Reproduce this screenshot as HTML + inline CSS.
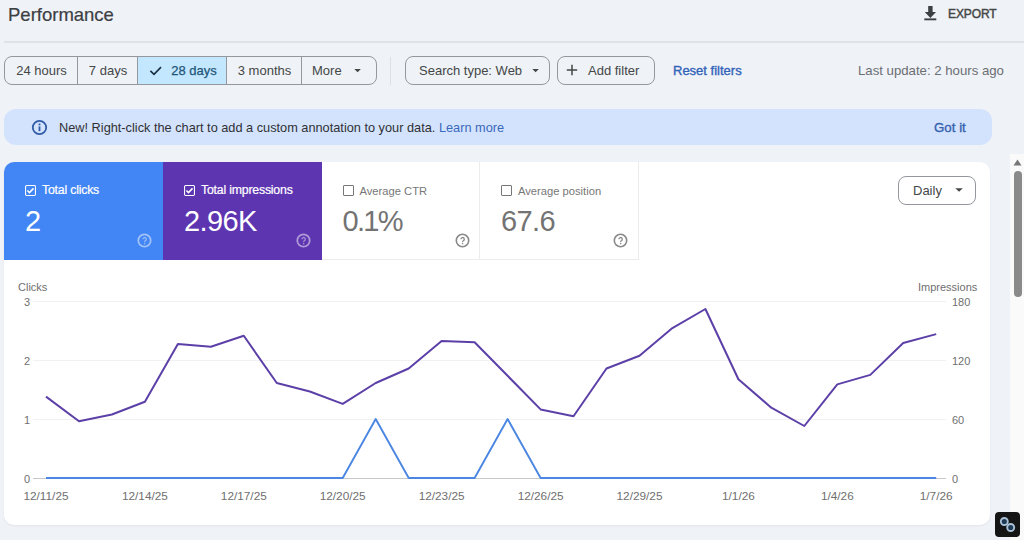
<!DOCTYPE html>
<html><head><meta charset="utf-8">
<style>
*{box-sizing:border-box;margin:0;padding:0}
html,body{width:1024px;height:540px;overflow:hidden;background:#eff2f7;font-family:"Liberation Sans",sans-serif;color:#1f1f1f}
.a{position:absolute;white-space:nowrap}
.md{-webkit-text-stroke:0.35px currentColor}
#title{left:8px;top:4px;font-size:18.5px;color:#3c4043;line-height:22px;-webkit-text-stroke:0.2px currentColor}
#export{left:948px;top:7px;font-size:12px;color:#444746;line-height:14px;-webkit-text-stroke:0.45px currentColor;letter-spacing:-0.1px}
#divider{left:4px;top:41px;width:1020px;height:2px;background:#dfe2e7}
.seg{position:absolute;top:0;height:27px;border:none;font-size:13px;color:#444746;line-height:27px;text-align:center}
.btn{position:absolute;top:56px;height:29px;border:1px solid #94979c;border-radius:8px;font-size:13px;color:#444746;line-height:27px}
#banner{left:4px;top:109px;width:988px;height:36px;background:#d3e3fd;border-radius:12px}
#card{left:4px;top:162px;width:986px;height:363px;background:#fff;border-radius:10px;overflow:hidden;box-shadow:0 1px 2px rgba(60,64,67,.08)}
.metric{position:absolute;top:0;height:97.5px;width:159px}
.mlabel{position:absolute;left:38px;top:21px;font-size:12.3px;letter-spacing:-0.2px;line-height:14px;white-space:nowrap}
.ml2{font-size:11.2px;letter-spacing:0;top:22px}
.mval{position:absolute;left:21px;top:43px;font-size:29px;letter-spacing:-0.6px;line-height:33px}
.cb{position:absolute;left:21px;top:23px;width:11px;height:11px;border:1px solid;border-radius:1px}
.help{position:absolute;left:133px;top:71px;width:15px;height:15px}
.ax{position:absolute;font-size:11px;color:#6f6f6f;line-height:12px;white-space:nowrap}
.xl{position:absolute;font-size:11.8px;color:#6f6f6f;line-height:12px;white-space:nowrap;top:490px;width:80px;text-align:center}
</style></head><body>
<div class="a" id="title">Performance</div>
<svg class="a" style="left:922px;top:4px" width="16" height="18" viewBox="0 0 16 18"><path d="M6.2 2h4.4v6h3.4l-5.6 6l-5.6-6h3.4z" fill="#3c4043"/><rect x="2.3" y="14.4" width="12" height="1.9" fill="#3c4043"/></svg>
<div class="a" id="export">EXPORT</div>
<div class="a" id="divider"></div>

<div class="a" style="left:4px;top:56px;width:373px;height:29px;border:1px solid #94979c;border-radius:8px;overflow:hidden">
<div class="seg" style="left:0;width:73px">24 hours</div>
<div class="seg" style="left:72px;width:61px;border-left:1px solid #94979c">7 days</div>
<div class="seg" style="left:132px;width:90px;border-left:1px solid #94979c;background:#c2e7ff;color:#1f5677;padding-left:23px;-webkit-text-stroke:0.25px currentColor">28 days</div>
<div class="seg" style="left:221px;width:76px;border-left:1px solid #94979c">3 months</div>
<div class="seg" style="left:296px;width:76px;border-left:1px solid #94979c;text-align:left;padding-left:10px">More</div>
</div>
<svg class="a" style="left:149px;top:64px" width="14" height="12" viewBox="0 0 14 12"><path d="M1.4 6.9l3.6 3.5l7-7.3" stroke="#1b2f3f" stroke-width="1.6" fill="none"/></svg>
<svg class="a" style="left:352px;top:68px" width="10" height="6"><path d="M2.3 1h6.6l-3.3 3.3z" fill="#444746"/></svg>
<div class="a" style="left:390px;top:57px;width:1px;height:28px;background:#dcdfe4"></div>

<div class="btn" style="left:405px;width:145px;padding-left:13px">Search type: Web</div>
<svg class="a" style="left:530px;top:68px" width="10" height="6"><path d="M2.3 1h6.6l-3.3 3.3z" fill="#444746"/></svg>
<div class="btn" style="left:557px;width:98px;padding-left:30px">Add filter</div>
<svg class="a" style="left:565px;top:63px" width="14" height="14"><path d="M7 1.8v10.4M1.8 7h10.4" stroke="#444746" stroke-width="1.5"/></svg>
<div class="a md" style="left:673px;top:63px;font-size:13px;color:#3163b8;line-height:15px">Reset filters</div>
<div class="a" style="left:858px;top:63px;font-size:13.2px;color:#6b6e72;line-height:15px">Last update: 2 hours ago</div>

<div class="a" id="banner"></div>
<svg class="a" style="left:31px;top:119px" width="17" height="17" viewBox="0 0 17 17"><circle cx="8.5" cy="8.5" r="6.7" stroke="#2f5ba6" stroke-width="1.8" fill="none"/><rect x="7.6" y="7.4" width="1.8" height="4.8" fill="#2f5ba6"/><rect x="7.6" y="4.5" width="1.8" height="1.8" fill="#2f5ba6"/></svg>
<div class="a" style="left:59px;top:120px;font-size:12.75px;color:#303134;line-height:15px">New! Right-click the chart to add a custom annotation to your data. <span style="color:#3a68bb">Learn more</span></div>
<div class="a md" style="left:934px;top:120px;font-size:13.3px;color:#3361ae;line-height:15px">Got it</div>

<div class="a" id="card">
  <div class="metric" style="left:0;width:159px;background:#4285f4;color:#fff">
    <svg class="cb" style="border:none" width="12" height="12" viewBox="0 0 12 12"><rect x="0.6" y="0.6" width="10.8" height="10.8" rx="1" fill="none" stroke="#fff" stroke-width="1.2"/><path d="M2.6 6l2.3 2.3l4.4-4.6" fill="none" stroke="#fff" stroke-width="1.7"/></svg>
    <div class="mlabel" style="-webkit-text-stroke:0.2px #fff">Total clicks</div><div class="mval">2</div>
    <svg class="help" viewBox="0 0 15 15"><circle cx="7.5" cy="7.5" r="6.2" fill="none" stroke="rgba(255,255,255,.5)" stroke-width="1.8"/><path d="M5.9 6.2a1.7 1.7 0 1 1 2.5 1.5c-.5.3-.8.6-.8 1.2" fill="none" stroke="rgba(255,255,255,.45)" stroke-width="1.3"/><circle cx="7.6" cy="10.6" r=".8" fill="rgba(255,255,255,.45)"/></svg>
  </div>
  <div class="metric" style="left:159px;width:158.5px;background:#5e35b1;color:#fff">
    <svg class="cb" style="border:none" width="12" height="12" viewBox="0 0 12 12"><rect x="0.6" y="0.6" width="10.8" height="10.8" rx="1" fill="none" stroke="#fff" stroke-width="1.2"/><path d="M2.6 6l2.3 2.3l4.4-4.6" fill="none" stroke="#fff" stroke-width="1.7"/></svg>
    <div class="mlabel" style="-webkit-text-stroke:0.2px #fff">Total impressions</div><div class="mval">2.96K</div>
    <svg class="help" viewBox="0 0 15 15"><circle cx="7.5" cy="7.5" r="6.2" fill="none" stroke="rgba(255,255,255,.5)" stroke-width="1.8"/><path d="M5.9 6.2a1.7 1.7 0 1 1 2.5 1.5c-.5.3-.8.6-.8 1.2" fill="none" stroke="rgba(255,255,255,.45)" stroke-width="1.3"/><circle cx="7.6" cy="10.6" r=".8" fill="rgba(255,255,255,.45)"/></svg>
  </div>
  <div class="metric" style="left:317.5px;width:158.5px;color:#737373;border-right:1px solid #ececec;border-bottom:1px solid #ececec">
    <div class="cb" style="border-color:#777"></div>
    <div class="mlabel ml2" style="color:#777">Average CTR</div><div class="mval" style="letter-spacing:-1.7px">0.1%</div>
    <svg class="help" viewBox="0 0 15 15"><circle cx="7.5" cy="7.5" r="6.2" fill="none" stroke="#8a8a8a" stroke-width="1.6"/><path d="M5.9 6.2a1.7 1.7 0 1 1 2.5 1.5c-.5.3-.8.6-.8 1.2" fill="none" stroke="#8a8a8a" stroke-width="1.3"/><circle cx="7.6" cy="10.6" r=".8" fill="#8a8a8a"/></svg>
  </div>
  <div class="metric" style="left:476px;width:159px;color:#737373;border-right:1px solid #ececec;border-bottom:1px solid #ececec">
    <div class="cb" style="border-color:#777"></div>
    <div class="mlabel ml2" style="color:#777">Average position</div><div class="mval">67.6</div>
    <svg class="help" viewBox="0 0 15 15"><circle cx="7.5" cy="7.5" r="6.2" fill="none" stroke="#8a8a8a" stroke-width="1.6"/><path d="M5.9 6.2a1.7 1.7 0 1 1 2.5 1.5c-.5.3-.8.6-.8 1.2" fill="none" stroke="#8a8a8a" stroke-width="1.3"/><circle cx="7.6" cy="10.6" r=".8" fill="#8a8a8a"/></svg>
  </div>
  <div class="a" style="left:894px;top:14px;width:78px;height:29px;border:1px solid #94979c;border-radius:8px;font-size:13px;color:#444746;line-height:27px;padding-left:14px">Daily</div>
  <svg class="a" style="left:950px;top:25px" width="10" height="6"><path d="M1.3 1.3h7.5l-3.75 3.4z" fill="#444746"/></svg>
</div>

<svg class="a" style="left:0;top:0" width="1024" height="540">
  <g stroke="#f1f1f1" stroke-width="1">
    <line x1="33" y1="301.5" x2="946" y2="301.5"/>
    <line x1="33" y1="360.5" x2="946" y2="360.5"/>
    <line x1="33" y1="419.5" x2="946" y2="419.5"/>
  </g>
  <line x1="33" y1="478.5" x2="946" y2="478.5" stroke="#c8c8c8" stroke-width="1"/>
  <polyline fill="none" stroke="#5c40a8" stroke-width="2" stroke-linejoin="round" points="46.0,396.6 79.0,421.3 111.9,414.5 144.9,401.8 177.9,343.9 210.9,346.8 243.8,335.8 276.8,383 309.8,391.5 342.7,403.9 375.7,383 408.7,368.5 441.6,340.9 474.6,342.2 507.6,375.8 540.6,409.4 573.5,416.2 606.5,368.5 639.5,355.8 672.4,328.1 705.4,309 738.4,379.2 771.3,407.7 804.3,426 837.3,384.4 870.3,374.9 903.2,343 936.2,334.1"/>
  <polyline fill="none" stroke="#4a86e2" stroke-width="1.9" stroke-linejoin="round" points="46.0,478 79.0,478 111.9,478 144.9,478 177.9,478 210.9,478 243.8,478 276.8,478 309.8,478 342.7,478 375.7,419 408.7,478 441.6,478 474.6,478 507.6,419 540.6,478 573.5,478 606.5,478 639.5,478 672.4,478 705.4,478 738.4,478 771.3,478 804.3,478 837.3,478 870.3,478 903.2,478 936.2,478"/>
</svg>
<div class="ax" style="left:18px;top:281px">Clicks</div>
<div class="ax" style="left:918px;top:281px">Impressions</div>
<div class="ax" style="left:24px;top:296px">3</div>
<div class="ax" style="left:24px;top:355px">2</div>
<div class="ax" style="left:24px;top:414px">1</div>
<div class="ax" style="left:24px;top:473px">0</div>
<div class="ax" style="left:952px;top:296px">180</div>
<div class="ax" style="left:952px;top:355px">120</div>
<div class="ax" style="left:952px;top:414px">60</div>
<div class="ax" style="left:952px;top:473px">0</div>
<div class="xl" style="left:6.0px">12/11/25</div>
<div class="xl" style="left:104.9px">12/14/25</div>
<div class="xl" style="left:203.8px">12/17/25</div>
<div class="xl" style="left:302.7px">12/20/25</div>
<div class="xl" style="left:401.6px">12/23/25</div>
<div class="xl" style="left:500.6px">12/26/25</div>
<div class="xl" style="left:599.5px">12/29/25</div>
<div class="xl" style="left:698.4px">1/1/26</div>
<div class="xl" style="left:797.3px">1/4/26</div>
<div class="xl" style="left:896.2px">1/7/26</div>

<!-- scrollbar -->
<div class="a" style="left:1010px;top:154px;width:14px;height:386px;background:#fafafa"></div>
<svg class="a" style="left:1012px;top:158px" width="11" height="9"><path d="M1.5 7.5h8l-4-6z" fill="#777"/></svg>
<div class="a" style="left:1014px;top:171px;width:8px;height:126px;background:#8a8a8a;border-radius:4px"></div>
<div class="a" style="left:995px;top:512px;width:25px;height:25px;background:#151515;border-radius:4px"></div>
<svg class="a" style="left:995px;top:512px" width="25" height="25" viewBox="0 0 25 25"><circle cx="9.3" cy="9.5" r="3.5" fill="#1f3a55" stroke="#a9c0d6" stroke-width="1.9"/><circle cx="15.7" cy="15.5" r="3.5" fill="#1f3a55" stroke="#a9c0d6" stroke-width="1.9"/></svg>
</body></html>
